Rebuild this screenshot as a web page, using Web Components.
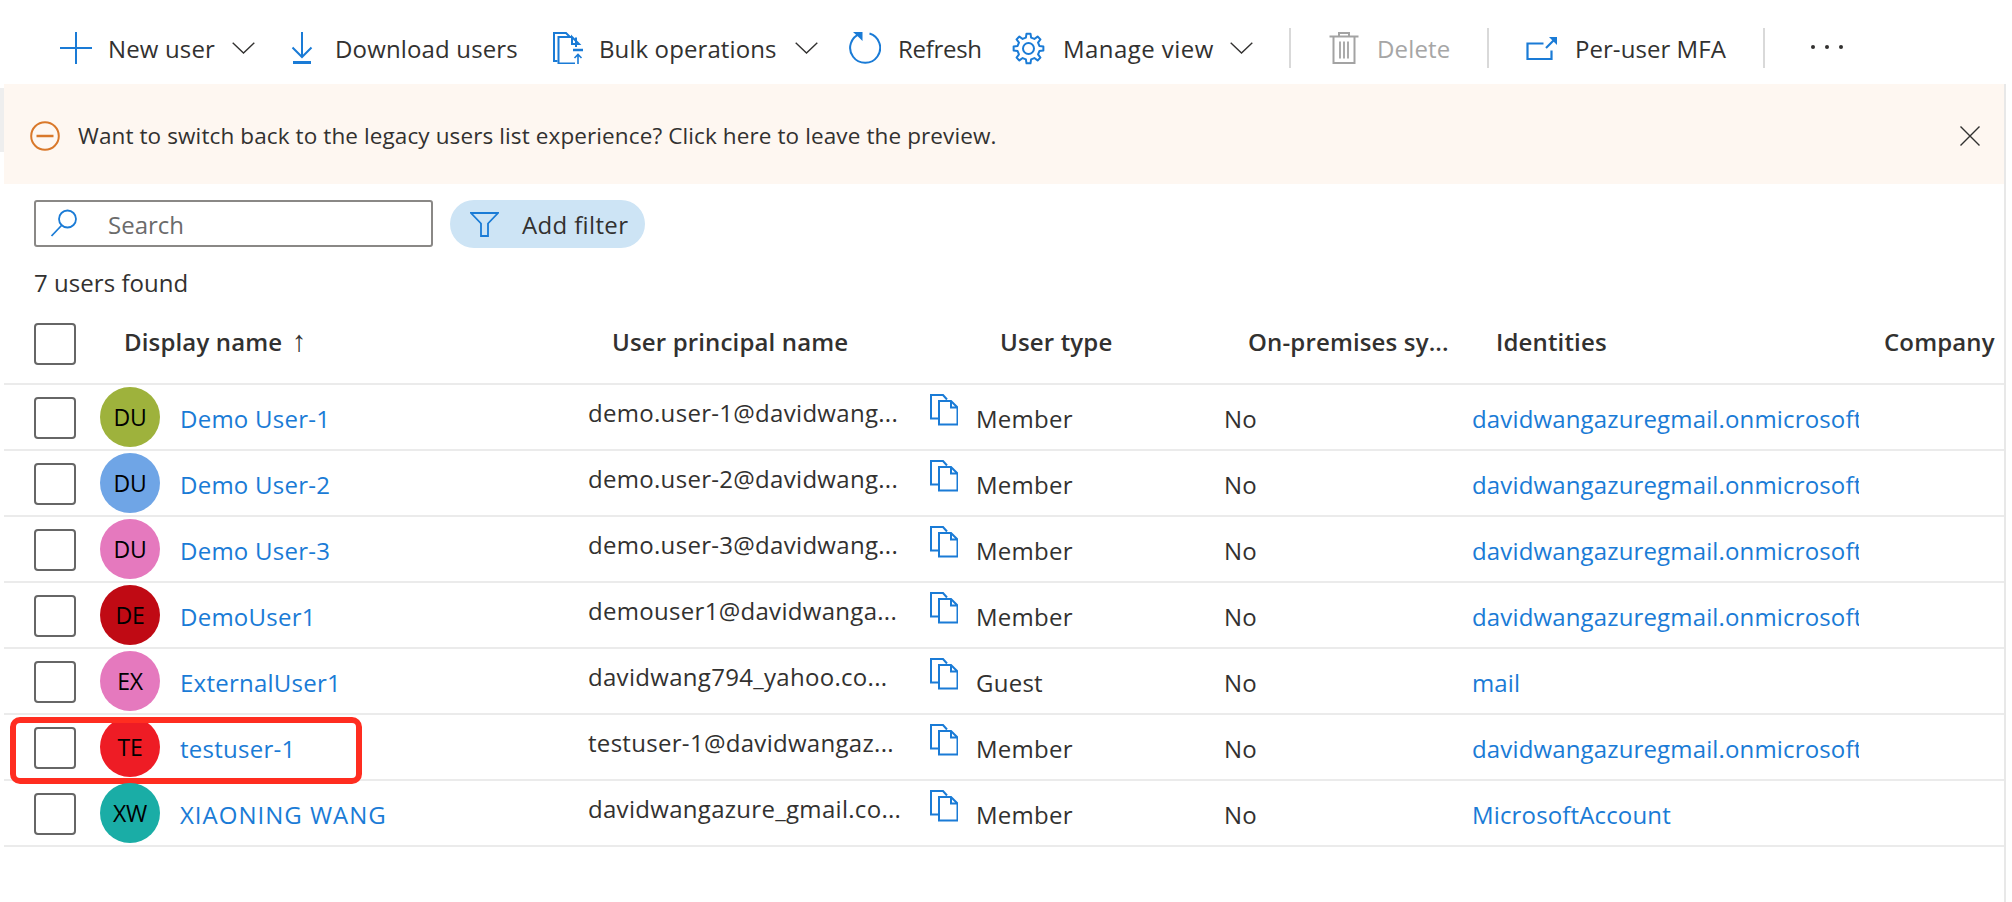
<!doctype html>
<html><head><meta charset="utf-8">
<style>
html,body{margin:0;background:#fff;font-family:"Open Sans","Noto Sans","Liberation Sans",sans-serif;color:#323130}
</style></head>
<body>
<users-page></users-page>
<script>
const BLUE='#1a7bd6';
function gearPath(cx,cy,ro,ri){
  let d='';const n=8;
  for(let i=0;i<n;i++){
    const a=i*2*Math.PI/n-Math.PI/2, s=2*Math.PI/n;
    const pts=[[ri,a-s*.30],[ro,a-s*.17],[ro,a+s*.17],[ri,a+s*.30]];
    pts.forEach((p,j)=>{d+=((i==0&&j==0)?'M':'L')+(cx+p[0]*Math.cos(p[1])).toFixed(2)+' '+(cy+p[0]*Math.sin(p[1])).toFixed(2)});
  }
  return d+'Z';
}
const ICONS={
 plus:[32,32,'60 32 32 32',`<path d="M76 32V64M60 48H92" fill="none" stroke="${BLUE}" stroke-width="2"/>`],
 download:[22,32,'291 32 22 32',`<path d="M302 32V57M292.5 47.5L302 57L311.5 47.5" fill="none" stroke="${BLUE}" stroke-width="2"/><path d="M293 62.5H311" stroke="${BLUE}" stroke-width="3"/>`],
 bulk:[31,32,'8 11 31 32',`<g fill="none" stroke="${BLUE}" stroke-width="2"><path d="M12.5 40H9V12H21L25 16"/><path d="M31 26V16.5M27 16H13.500V42.500H30M27 16L34 23H27Z"/><path d="M33 43V33.500M29.500 37L33 33.500L36.500 37" stroke-width="1.600"/></g><path d="M28 29H38" stroke="${BLUE}" stroke-width="2.500"/>`],
 refresh:[32,32,'9 12 32 32',`<g fill="none" stroke="${BLUE}" stroke-width="2"><path d="M29.500 13.500A15 15 0 1 1 20.500 13.600"/></g><path d="M13 12H22.500V21L19.500 18L13 12Z" fill="${BLUE}"/>`],
 gear:[33,33,'7.500 11 33 33',`<path d="${gearPath(24,27.5,15,11.2)}" fill="none" stroke="${BLUE}" stroke-width="2" stroke-linejoin="round"/><circle cx="24" cy="27.500" r="5.500" fill="none" stroke="${BLUE}" stroke-width="2"/>`],
 trash:[30,32,'9.500 11.500 30 32',`<g fill="none" stroke="#a3a3a3" stroke-width="2"><path d="M10 16H39M19.500 16V12.500H29.500V16M14 16V42.500H35V16"/><path d="M20.500 21V38M24.500 21V38M28.500 21V38" stroke-width="1.800"/></g>`],
 mfa:[31,23,'6.500 10 31 23',`<g fill="none" stroke="${BLUE}" stroke-width="2.200"><path d="M24 16.500H8V32H32V23.500"/><path d="M26.500 21L36 11.500"/></g><path d="M29.500 10H37.500V18Z" fill="${BLUE}"/>`],
 chev:[23,12,'0 0 23 12',`<path d="M.7 .7L11.500 11L22.300 .7" fill="none" stroke="#323130" stroke-width="1.400"/>`],
 copy:[28,32,'5 9 28 32',`<g fill="none" stroke="${BLUE}" stroke-width="2"><path d="M13.500 33.500H6V10H18L22 14.500"/><path d="M14 16H26L32.500 22.500V39.500H14ZM26 16V22.500H32.500"/></g>`],
 search:[30,30,'0 0 30 30',`<circle cx="17.500" cy="10" r="8.500" fill="none" stroke="${BLUE}" stroke-width="1.800"/><path d="M11.500 16.500L1.500 27" stroke="${BLUE}" stroke-width="1.800" fill="none"/>`],
 filter:[29,25,'0 0 29 25',`<path d="M1 1H28L18 11.500V24H11V11.500Z" fill="none" stroke="${BLUE}" stroke-width="1.800"/>`],
 minus:[30,30,'0 0 30 30',`<circle cx="15" cy="15" r="13.800" fill="none" stroke="#d9782a" stroke-width="2"/><path d="M6.500 15H23.500" stroke="#d9782a" stroke-width="2.500"/>`],
 close:[20,20,'0 0 20 20',`<path d="M.5 .5L19.500 19.500M19.500 .5L.5 19.500" stroke="#323130" stroke-width="1.400" fill="none"/>`]
};
function svg(n){const i=ICONS[n];return `<svg width="${i[0]}" height="${i[1]}" viewBox="${i[2]}" style="display:block;flex:none">${i[3]}</svg>`}

class CmdItem extends HTMLElement{
 connectedCallback(){
  const r=this.attachShadow({mode:'open'});
  const ic=this.getAttribute('icon'),w=this.getAttribute('w'),ls=this.getAttribute('ls')||'0',g=this.getAttribute('g')||16,cg=this.getAttribute('cg')||17;
  const dis=this.hasAttribute('disabled');
  r.innerHTML=`<style>:host{display:flex;align-items:center;height:40px}
  .t{width:${w}px;margin-left:${g}px;white-space:nowrap;letter-spacing:${ls}px;font-size:24px;line-height:40px;padding-top:1px;color:${dis?'#a6a6a6':'#323130'}}
  .c{margin-left:${cg}px}</style>${svg(ic)}<span class="t"><slot></slot></span>${this.hasAttribute('chev')?`<span class="c">${svg('chev')}</span>`:''}`;
 }
}
customElements.define('cmd-item',CmdItem);

class CommandBar extends HTMLElement{
 constructor(){super();this.attachShadow({mode:'open'}).innerHTML=`<style>
 :host{display:flex;align-items:center;height:40px;padding:28px 0 16px 60px}
 cmd-item{flex:none}
 .sep{width:2px;height:40px;background:#d9d9d9;flex:none}
 .dots{display:flex;gap:10px;margin-left:46px;margin-bottom:3px}.dots i{width:4px;height:4px;border-radius:50%;background:#323130;display:block}
 </style>
 <cmd-item icon="plus" w="107" chev ls=".15">New user</cmd-item>
 <cmd-item icon="download" w="183" g="22" ls=".15" style="margin-left:36px">Download users</cmd-item>
 <cmd-item icon="bulk" w="178" g="15" ls=".1" chev cg="18" style="margin-left:35px">Bulk operations</cmd-item>
 <cmd-item icon="refresh" w="83" g="17" ls="-.3" style="margin-left:31px">Refresh</cmd-item>
 <cmd-item icon="gear" w="150" g="18" ls=".45" chev cg="17" style="margin-left:31px">Manage view</cmd-item>
 <div class="sep" style="margin-left:36px"></div>
 <cmd-item icon="trash" w="73" g="18" ls=".15" disabled style="margin-left:38px">Delete</cmd-item>
 <div class="sep" style="margin-left:37px"></div>
 <cmd-item icon="mfa" w="150" g="18" ls=".05" style="margin-left:37px">Per-user MFA</cmd-item>
 <div class="sep" style="margin-left:38px"></div>
 <div class="dots"><i></i><i></i><i></i></div>`;}
}
customElements.define('command-bar',CommandBar);

class NoticeBanner extends HTMLElement{
 constructor(){super();this.attachShadow({mode:'open'}).innerHTML=`<style>
 :host{display:flex;align-items:center;height:100px;background:#fef7f1;padding:3px 24px 0 26px;box-sizing:border-box;font-size:22.500px}
 .t{margin-left:18px;flex:1;white-space:nowrap;letter-spacing:.11px}
 </style>${svg('minus')}<span class="t"><slot></slot></span>${svg('close')}`;}
}
customElements.define('notice-banner',NoticeBanner);

class FilterBar extends HTMLElement{
 constructor(){super();this.attachShadow({mode:'open'}).innerHTML=`<style>
 :host{display:flex;gap:17px;height:48px;margin:16px 0 0 30px}
 .s{width:399px;height:47px;box-sizing:border-box;border:2px solid #8a8886;border-radius:3px;display:flex;align-items:center;padding-left:14px;font-size:24px;color:#6b6b6b}
 .s span{margin-left:28px;padding-top:1px}
 .f{width:195px;height:48px;border-radius:24px;background:#cde4f5;display:flex;align-items:center;padding-left:20px;box-sizing:border-box;font-size:24px;letter-spacing:.35px}
 .f span{margin-left:23px}
 </style><div class="s">${svg('search')}<span>Search</span></div><div class="f">${svg('filter')}<span>Add filter</span></div>`;}
}
customElements.define('filter-bar',FilterBar);

class CheckBox extends HTMLElement{
 constructor(){super();this.attachShadow({mode:'open'}).innerHTML=`<style>
 :host{display:block;width:42px;height:42px;box-sizing:border-box;border:2px solid #666;border-radius:4px;background:#fff}</style>`;}
}
customElements.define('check-box',CheckBox);

const HCOLS='90px 488px 388px 248px 248px 388px 1fr';
class HeadRow extends HTMLElement{
 constructor(){super();this.attachShadow({mode:'open'}).innerHTML=`<style>
 :host{display:flex;align-items:center;height:70px;margin-top:13px;padding-left:30px;border-bottom:2px solid #ebebeb;font-size:24px;font-weight:600;letter-spacing:.15px;white-space:nowrap}
 .g{display:grid;grid-template-columns:${HCOLS};flex:1;align-items:center}
 check-box{margin-bottom:9px}
 span{position:relative;top:-7px}
 i{font-style:normal;font-weight:400;font-size:29px;line-height:0;margin-left:3px}
 </style><div class="g"><check-box></check-box><span>Display name <i>↑</i></span><span>User principal name</span><span>User type</span><span>On-premises sy...</span><span>Identities</span><span>Company</span></div>`;}
}
customElements.define('head-row',HeadRow);

class UserRow extends HTMLElement{
 connectedCallback(){
  const a=n=>this.getAttribute(n);
  this.attachShadow({mode:'open'}).innerHTML=`<style>
 :host{display:block;position:relative;height:64px;padding-left:30px;border-bottom:2px solid #ebebeb;font-size:24px;letter-spacing:.25px;white-space:nowrap}
 .g{display:grid;height:64px;grid-template-columns:66px 80px 408px 342px 46px 248px 248px 387px;align-items:center}
 check-box{margin-top:2px}
 .av{width:60px;height:60px;border-radius:50%;background:${a('color')};color:#000;display:flex;align-items:center;justify-content:center;font-size:23px;letter-spacing:-.3px}
 .l{color:${BLUE}}
 .tx{padding-top:2px}
 .n{letter-spacing:${a('ls')||'.25'}px}
 .u{padding-bottom:9px;letter-spacing:.3px}
 .cp{padding-bottom:14px}
 .id{overflow:hidden;letter-spacing:.15px}
 .hl{position:absolute;left:6px;top:2px;width:352px;height:67px;box-sizing:border-box;border:6px solid #ff2d20;border-radius:10px;pointer-events:none}
 </style><div class="g"><check-box></check-box><div class="av">${a('initials')}</div>
 <div class="l tx n">${a('name')}</div><div class="u">${a('upn')}</div><div class="cp">${svg('copy')}</div>
 <div class="tx">${a('type')}</div><div class="tx">No</div><div class="l tx id">${a('ident')}</div></div>${this.hasAttribute('highlight')?'<div class="hl"></div>':''}`;
 }
}
customElements.define('user-row',UserRow);

class UsersPage extends HTMLElement{
 constructor(){super();
  const O='davidwangazuregmail.onmicrosoft';
  const rows=[
   ['DU','#9eb23c','Demo User-1','demo.user-1@davidwang...','Member',O],
   ['DU','#6fa5e6','Demo User-2','demo.user-2@davidwang...','Member',O],
   ['DU','#e579be','Demo User-3','demo.user-3@davidwang...','Member',O],
   ['DE','#c00a14','DemoUser1','demouser1@davidwanga...','Member',O],
   ['EX','#e579be','ExternalUser1','davidwang794_yahoo.co...','Guest','mail'],
   ['TE','#ee1c25','testuser-1','testuser-1@davidwangaz...','Member',O,1],
   ['XW','#1aada6','XIAONING WANG','davidwangazure_gmail.co...','Member','MicrosoftAccount',0,'1']
  ];
  this.attachShadow({mode:'open'}).innerHTML=`<style>
 :host{display:block;height:902px;overflow:hidden}
 .main{height:818px;width:2006px;box-sizing:border-box;border-right:2px solid #e8e8e8;padding-left:4px}
 .rail{position:absolute;left:0;top:88px;width:4px;height:64px;background:#eee}
 .count{font-size:24px;letter-spacing:.05px;margin:18px 0 0 30px;line-height:34px}
 </style><command-bar></command-bar><div class="rail"></div><div class="main">
 <notice-banner>Want to switch back to the legacy users list experience? Click here to leave the preview.</notice-banner>
 <filter-bar></filter-bar><div class="count">7 users found</div><head-row></head-row>
 ${rows.map(r=>`<user-row initials="${r[0]}" color="${r[1]}" name="${r[2]}" upn="${r[3]}" type="${r[4]}" ident="${r[5]}" ${r[7]?`ls="${r[7]}"`:''} ${r[6]?'highlight':''}></user-row>`).join('')}
 </div>`;}
}
customElements.define('users-page',UsersPage);
</script>
</body></html>
